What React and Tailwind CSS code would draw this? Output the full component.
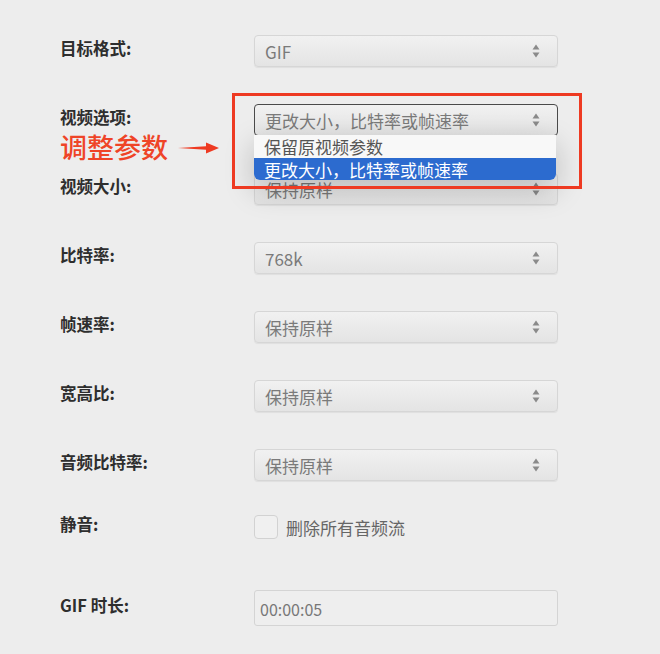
import React from 'react';

const FONT = { fontFamily: '"Noto Sans CJK SC", "Noto Sans", sans-serif' };

const Chevrons = () => (
    <svg width="8" height="14" viewBox="0 0 8 14" className="shrink-0">
        <path d="M4 0.5 L7.5 5.5 L0.5 5.5 Z" fill="#8a8a8a" />
        <path d="M4 13.5 L7.5 8.5 L0.5 8.5 Z" fill="#8a8a8a" />
    </svg>
);

const Select = ({ value, active }) => (
    <div
        className={
            'flex h-[32px] w-[304px] items-center justify-between rounded-[4px] pl-[10px] pr-[17px] bg-gradient-to-b from-[#f1f1f1] to-[#e4e4e4] ' +
            (active ? 'border border-[#4a4a4a]' : 'border border-[#d6d6d6] shadow-[0_1px_1px_rgba(0,0,0,0.06)]')
        }
    >
        <span className="text-[17px] leading-none text-[#7a7a7a]">{value}</span>
        <Chevrons />
    </div>
);

const Row = ({ label, children, className = '' }) => (
    <div className={'flex items-center ' + className}>
        <div className="w-[194px] -mt-[6px] text-[16.5px] font-bold text-[#2e2e2e]">{label}</div>
        {children}
    </div>
);

export default function App() {
    return (
        <div style={FONT} className="relative h-[654px] w-[660px] overflow-hidden bg-[#ededed]">
            <div className="flex flex-col pl-[60px] pt-[35px]">
                <Row label="目标格式:" className="h-[32px]">
                    <Select value="GIF" />
                </Row>

                <Row label="视频选项:" className="mt-[37px] h-[32px]">
                    <div className="relative">
                        <Select value="更改大小，比特率或帧速率" active />
                        {/* open dropdown */}
                        <div className="absolute left-0 top-[31px] z-20 w-[302px] overflow-hidden rounded-b-[6px] bg-[#f8f8f8] shadow-[0_10px_30px_rgba(0,0,0,0.22)]">
                            <div className="flex h-[23px] items-center pl-[10px] text-[17px] leading-none text-[#555]">保留原视频参数</div>
                            <div className="flex h-[22px] items-center bg-[#2c6bcf] pl-[10px] text-[17px] leading-none text-white">更改大小，比特率或帧速率</div>
                        </div>
                    </div>
                </Row>

                <Row label="视频大小:" className="mt-[37px] h-[32px]">
                    <Select value="保持原样" />
                </Row>

                <Row label="比特率:" className="mt-[37px] h-[32px]">
                    <Select value="768k" />
                </Row>

                <Row label="帧速率:" className="mt-[37px] h-[32px]">
                    <Select value="保持原样" />
                </Row>

                <Row label="宽高比:" className="mt-[37px] h-[32px]">
                    <Select value="保持原样" />
                </Row>

                <Row label="音频比特率:" className="mt-[37px] h-[32px]">
                    <Select value="保持原样" />
                </Row>

                <Row label="静音:" className="mt-[34px] h-[24px]">
                    <div className="flex items-center">
                        <div className="h-[24px] w-[24px] rounded-[4px] border border-[#d2d2d2] bg-[#f0f0f0]" />
                        <span className="ml-[8px] text-[17px] leading-none text-[#666]">删除所有音频流</span>
                    </div>
                </Row>

                <Row label="GIF 时长:" className="mt-[51px] h-[36px]">
                    <div className="flex h-[36px] w-[304px] items-center rounded-[3px] border border-[#d4d4d4] bg-[#eeeeee] pl-[5px] pt-[2px]">
                        <span className="text-[16px] leading-none text-[#777]">00:00:05</span>
                    </div>
                </Row>
            </div>

            {/* annotation */}
            <div className="absolute left-[232px] top-[93px] z-30 h-[96px] w-[350px] border-[3px] border-[#ee3a22]" />
            <div className="absolute left-[60px] top-[133px] z-30 flex items-center">
                <span className="text-[27px] leading-none font-medium text-[#ef4427]">调整参数</span>
                <svg width="42" height="12" viewBox="0 0 42 12" className="ml-[10px] mt-[2px]">
                    <path d="M0 6 L28 4.3 L28 0.5 L41 6 L28 11.5 L28 7.7 Z" fill="#ee3a22" />
                </svg>
            </div>
        </div>
    );
}
